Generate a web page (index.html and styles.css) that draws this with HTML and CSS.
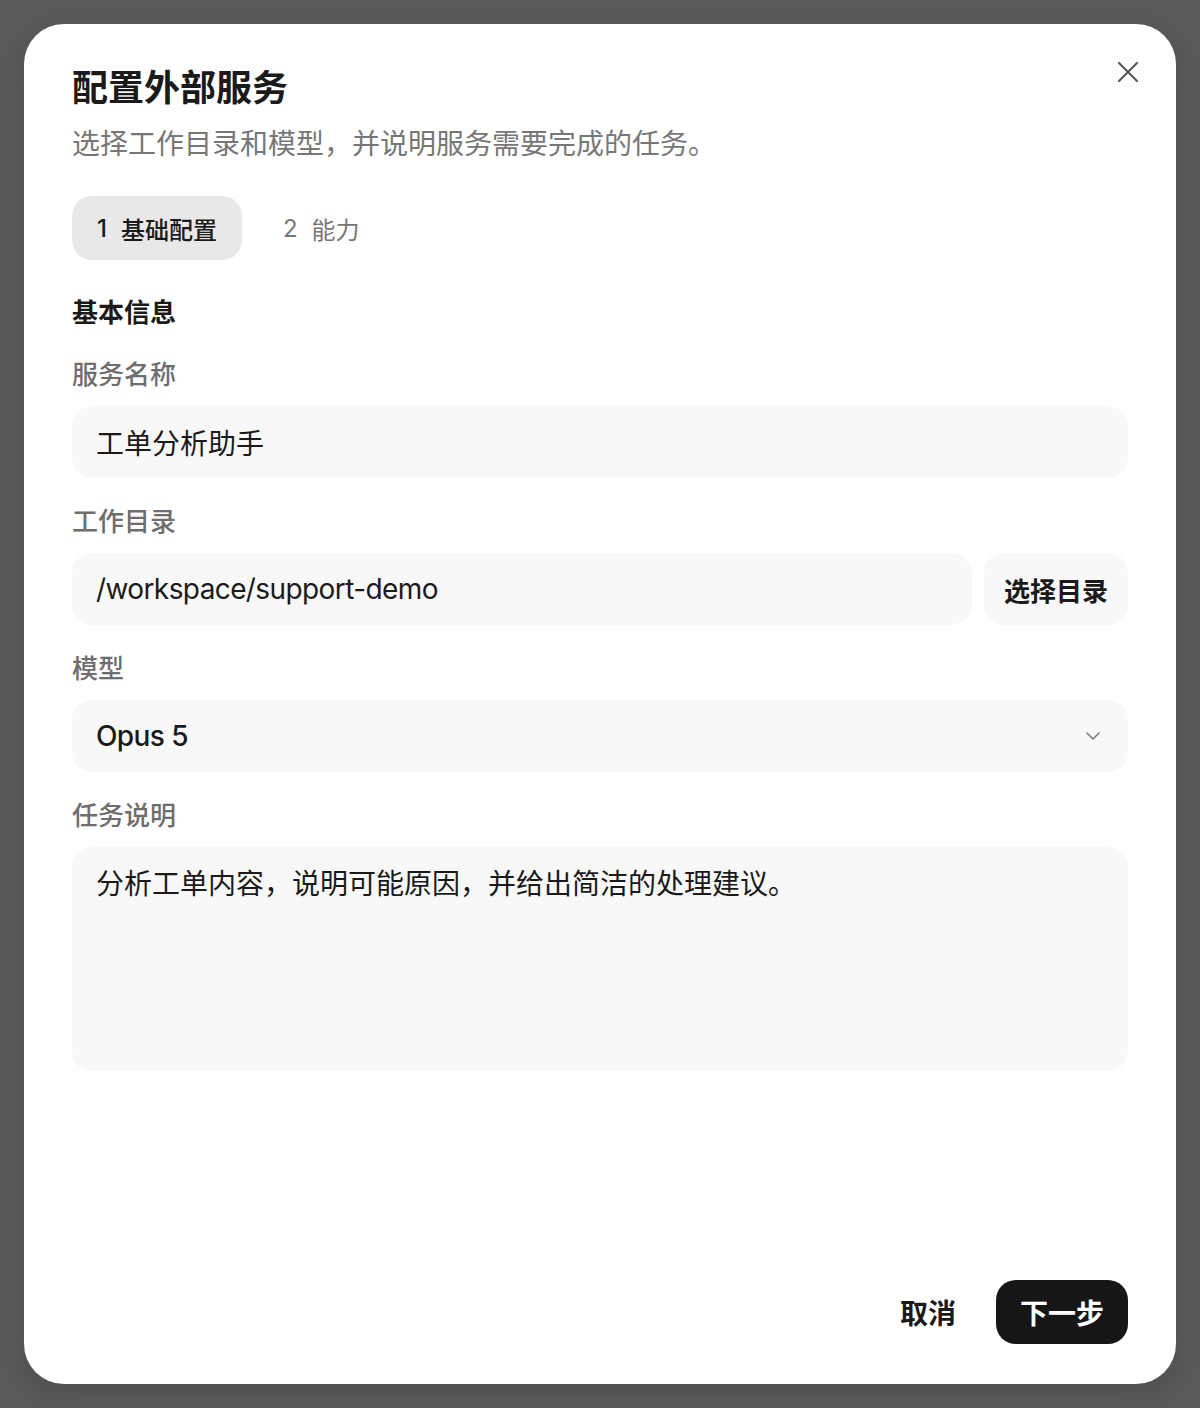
FILE: index.html
```html
<!DOCTYPE html>
<html lang="zh-CN">
<head>
    <meta charset="UTF-8">
    <meta name="viewport" content="width=device-width, initial-scale=1.0">
    <title>配置外部服务</title>
    <link rel="stylesheet" href="styles.css">
</head>
<body>

    <!-- Dialog -->
    <div class="modal">
        <button class="close-btn" aria-label="关闭">
            <svg width="20" height="20" viewBox="0 0 20 20" fill="none" stroke="currentColor" stroke-width="2" stroke-linecap="round">
                <path d="M1 1 L19 19 M19 1 L1 19"/>
            </svg>
        </button>

        <!-- Header -->
        <h1 class="modal-title">配置外部服务</h1>
        <p class="modal-subtitle">选择工作目录和模型，并说明服务需要完成的任务。</p>

        <!-- Steps -->
        <div class="steps">
            <div class="step active"><span class="step-num">1</span><span>基础配置</span></div>
            <div class="step"><span class="step-num">2</span><span>能力</span></div>
        </div>

        <h2 class="section-title">基本信息</h2>

        <div class="form-group">
            <label class="field-label" for="serviceName">服务名称</label>
            <div class="field" id="serviceName">工单分析助手</div>
        </div>

        <div class="form-group">
            <label class="field-label" for="workDir">工作目录</label>
            <div class="field-row">
                <div class="field grow latin" id="workDir">/workspace/support-demo</div>
                <button class="pick-btn">选择目录</button>
            </div>
        </div>

        <div class="form-group">
            <label class="field-label" for="model">模型</label>
            <div class="field select" id="model">
                <span class="select-value latin">Opus 5</span>
                <svg class="chevron" width="14" height="8" viewBox="0 0 14 8" fill="none" stroke="currentColor" stroke-width="1.5" stroke-linecap="round" stroke-linejoin="round">
                    <path d="M1 1 L7 7 L13 1"/>
                </svg>
            </div>
        </div>

        <div class="form-group">
            <label class="field-label" for="task">任务说明</label>
            <div class="field textarea" id="task">分析工单内容，说明可能原因，并给出简洁的处理建议。</div>
        </div>

        <!-- Footer -->
        <div class="modal-footer">
            <button class="btn-cancel">取消</button>
            <button class="btn-next">下一步</button>
        </div>
    </div>

</body>
</html>
```

FILE: styles.css
```css
/* Base */
* {
    box-sizing: border-box;
}

body {
    margin: 0;
    padding: 24px;
    background-color: #595959;
    font-family: Inter, "Noto Sans CJK SC", sans-serif;
    color: #1a1a1a;
}

button {
    font-family: inherit;
    border: none;
    background: none;
    cursor: pointer;
}

/* Dialog */
.modal {
    position: relative;
    width: 1152px;
    height: 1360px;
    background-color: #fff;
    border-radius: 40px;
    padding: 40px 48px;
    display: flex;
    flex-direction: column;
    box-shadow: 0 8px 24px rgba(0,0,0,0.12);
}

.close-btn {
    position: absolute;
    top: 28px;
    right: 28px;
    width: 40px;
    height: 40px;
    padding: 0;
    display: flex;
    align-items: center;
    justify-content: center;
    color: #555;
}

.modal-title {
    margin: 0;
    font-size: 36px;
    line-height: 48px;
    font-weight: 700;
    color: #1a1a1a;
}

.modal-subtitle {
    margin: 12px 0 0;
    font-size: 28px;
    line-height: 40px;
    color: #777;
}

/* Steps */
.steps {
    display: flex;
    gap: 16px;
    margin-top: 32px;
}

.step {
    display: flex;
    align-items: center;
    gap: 14px;
    height: 64px;
    padding: 0 25px;
    border-radius: 20px;
    font-size: 24px;
    color: #777;
}

.step.active {
    background-color: #e8e8e8;
    color: #1a1a1a;
    font-weight: 500;
}

/* Form */
.section-title {
    margin: 35px 0 0;
    font-size: 26px;
    line-height: 36px;
    font-weight: 600;
}

.form-group {
    margin-top: 25px;
}

.field-label {
    display: block;
    margin-bottom: 12px;
    font-size: 26px;
    line-height: 38px;
    font-weight: 500;
    color: #6e6e6e;
}

.field {
    height: 72px;
    padding: 0 24px;
    display: flex;
    align-items: center;
    background-color: #f8f8f8;
    border-radius: 20px;
    font-size: 28px;
    color: #1a1a1a;
}

.latin {
    letter-spacing: -0.6px;
}

.field-row {
    display: flex;
    gap: 12px;
}

.field.grow {
    flex: 1;
}

.pick-btn {
    height: 72px;
    padding: 0 20px;
    background-color: #f8f8f8;
    border-radius: 20px;
    font-size: 26px;
    font-weight: 600;
    color: #1a1a1a;
}

.field.select {
    justify-content: space-between;
    padding-right: 28px;
}

.select-value {
    font-weight: 500;
}

.chevron {
    color: #777;
}

.field.textarea {
    height: 224px;
    align-items: flex-start;
    padding-top: 17px;
    line-height: 40px;
}

/* Footer */
.modal-footer {
    margin-top: auto;
    display: flex;
    justify-content: flex-end;
    gap: 16px;
}

.btn-cancel,
.btn-next {
    height: 64px;
    padding: 0 24px;
    border-radius: 20px;
    font-size: 28px;
    font-weight: 700;
}

.btn-cancel {
    color: #1a1a1a;
}

.btn-next {
    background-color: #161616;
    color: #fff;
}
```
